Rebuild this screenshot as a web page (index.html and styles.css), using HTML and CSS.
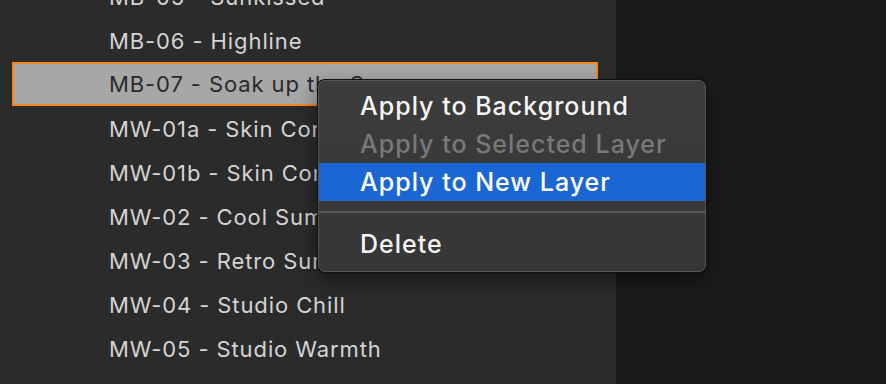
FILE: index.html
```html
<!DOCTYPE html>
<html lang="en">
<head>
    <meta charset="UTF-8">
    <title>Presets</title>
    <link rel="stylesheet" href="styles.css">
</head>
<body>
    <div class="app">
        <div class="preset-panel">
            <ul class="preset-list">
                <li class="preset">MB-05 - Sunkissed</li>
                <li class="preset">MB-06 - Highline</li>
                <li class="preset selected">MB-07 - Soak up the Sun</li>
                <li class="preset">MW-01a - Skin Contrast</li>
                <li class="preset">MW-01b - Skin Contrast</li>
                <li class="preset">MW-02 - Cool Summer</li>
                <li class="preset">MW-03 - Retro Summer</li>
                <li class="preset">MW-04 - Studio Chill</li>
                <li class="preset">MW-05 - Studio Warmth</li>
            </ul>
        </div>
        <div class="workspace"></div>

        <div class="context-menu">
            <div class="menu-item">Apply to Background</div>
            <div class="menu-item disabled">Apply to Selected Layer</div>
            <div class="menu-item active">Apply to New Layer</div>
            <div class="menu-separator"></div>
            <div class="menu-item">Delete</div>
        </div>
    </div>
</body>
</html>
```

FILE: styles.css
```css
body {
    margin: 0;
    padding: 0;
    font-family: 'Inter', 'Noto Sans', sans-serif;
    background: #1b1b1b;
    overflow: hidden;
}

.app {
    position: relative;
    display: flex;
    width: 886px;
    height: 384px;
}

/* Preset list */
.preset-panel {
    width: 616px;
    height: 100%;
    background: #2b2b2b;
    overflow: hidden;
}

.preset-list {
    list-style: none;
    margin: -26px 0 0 12px;
    padding: 0;
    width: 586px;
}

.preset {
    box-sizing: border-box;
    height: 44px;
    line-height: 42px;
    padding-left: 95px;
    font-size: 22px;
    letter-spacing: 0.9px;
    color: #d4d4d4;
    white-space: nowrap;
    overflow: hidden;
    border: 2px solid transparent;
}

.preset.selected {
    background: #a7a7a7;
    border-color: #f7891c;
    color: #2a2a2a;
    line-height: 40px;
}

.workspace {
    flex: 1;
    background: #1b1b1b;
}

/* Context menu */
.context-menu {
    position: absolute;
    left: 318px;
    top: 80px;
    width: 388px;
    box-sizing: border-box;
    padding: 6px 0 8px;
    background: linear-gradient(180deg, #3c3c3c, #363636);
    border: 1px solid #565656;
    border-radius: 7px;
    box-shadow: 0 0 0 1px #111, 0 8px 20px rgba(0, 0, 0, 0.5);
}

.menu-item {
    height: 38px;
    line-height: 38px;
    padding-left: 41px;
    font-size: 25px;
    font-weight: 500;
    letter-spacing: 1px;
    color: #f4f4f4;
}

.menu-item.disabled {
    color: #787878;
}

.menu-item.active {
    background: #1a66d2;
    color: #fff;
}

.menu-separator {
    height: 2px;
    margin: 10px 0 12px;
    background: #585858;
}
```
